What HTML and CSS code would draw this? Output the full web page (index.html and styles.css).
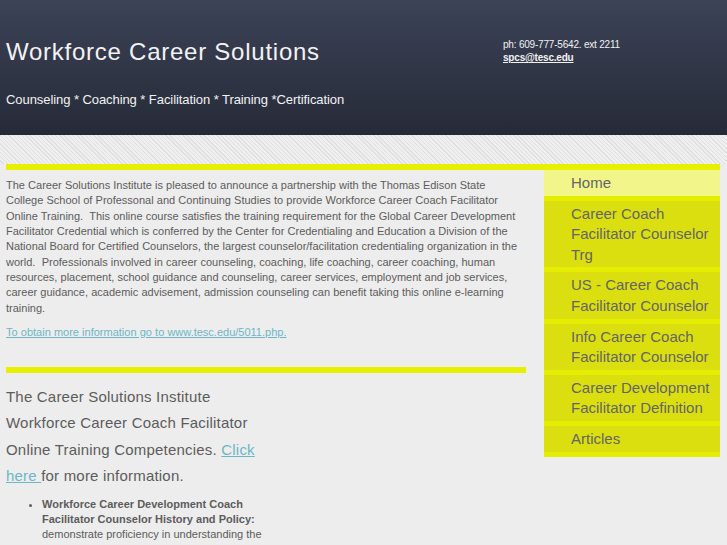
FILE: index.html
```html
<!DOCTYPE html>
<html lang="en">
<head>
    <meta charset="UTF-8">
    <meta name="viewport" content="width=device-width, initial-scale=1.0">
    <title>Workforce Career Solutions</title>
    <link rel="stylesheet" href="styles.css">
</head>
<body>
    <div class="header">
        <div class="brand">
            <h1>Workforce Career Solutions</h1>
            <p class="slogan">Counseling * Coaching * Facilitation * Training *Certification</p>
        </div>
        <div class="contact">
            <p>ph: 609-777-5642. ext 2211</p>
            <a href="#">spcs@tesc.edu</a>
        </div>
    </div>
    <div class="stripe"></div>

    <div class="page">
        <div class="bar"></div>
        <div class="columns">
            <div class="main">
                <p class="intro">The Career Solutions Institute is pleased to announce a partnership with the Thomas Edison State College School of Professonal and Continuing Studies to provide Workforce Career Coach Facilitator Online Training.&nbsp; This online course satisfies the training requirement for the Global Career Development Facilitator Credential which is conferred by the Center for Credentialing and Education a Division of the National Board for Certified Counselors, the largest counselor/facilitation credentialing organization in the world.&nbsp; Professionals involved in career counseling, coaching, life coaching, career coaching, human resources, placement, school guidance and counseling, career services, employment and job services, career guidance, academic advisement, admission counseling can benefit taking this online e-learning training.</p>
                <p class="intro"><a href="#">To obtain more information go to www.tesc.edu/5011.php.</a></p>

                <div class="bar short"></div>

                <div class="lower">
                    <div class="left">
                        <p class="lead">The Career Solutions Institute Workforce Career Coach Facilitator Online Training Competencies. <a href="#">Click here </a>for more information.</p>
                        <ul class="points">
                            <li><b>Workforce Career Development Coach Facilitator Counselor History and Policy:</b> demonstrate proficiency in understanding the</li>
                        </ul>
                    </div>
                </div>
            </div>

            <ul class="nav">
                <li class="current"><a href="#">Home</a></li>
                <li><a href="#">Career Coach Facilitator Counselor Trg</a></li>
                <li><a href="#">US - Career Coach Facilitator Counselor</a></li>
                <li><a href="#">Info Career Coach Facilitator Counselor</a></li>
                <li><a href="#">Career Development Facilitator Definition</a></li>
                <li><a href="#">Articles</a></li>
            </ul>
        </div>
    </div>
</body>
</html>
```

FILE: styles.css
```css
body {
    margin: 0;
    font-family: "Liberation Sans", Arial, sans-serif;
    background-color: #ededed;
    color: #5c5c5c;
}
a {
    color: #6db6c6;
}

/* header */
.header {
    height: 135px;
    display: flex;
    padding-left: 6px;
    background: linear-gradient(#3c4357, #262a38);
    color: #f2f2f2;
}
.brand {
    width: 497px;
}
.header h1 {
    margin: 37px 0 0;
    font-size: 24px;
    line-height: 30px;
    font-weight: normal;
    letter-spacing: 0.75px;
}
.slogan {
    margin: 25px 0 0;
    font-size: 13px;
    line-height: 16px;
    letter-spacing: -0.07px;
}
.contact {
    padding-top: 38px;
    font-size: 10px;
    line-height: 13px;
    letter-spacing: -0.2px;
}
.contact p {
    margin: 0;
}
.contact a {
    color: #f2f2f2;
    font-weight: bold;
}
.stripe {
    height: 29px;
    background: repeating-linear-gradient(45deg, #efefef 0, #efefef 2px, #e0e0e0 2px, #e0e0e0 3px);
}

/* content */
.page {
    padding: 0 7px 0 6px;
}
.bar {
    height: 6px;
    background-color: #e6f000;
}
.columns {
    display: flex;
    justify-content: space-between;
}
.main {
    width: 520px;
}
.intro {
    width: 518px;
    margin: 8px 0 9px;
    font-size: 11px;
    line-height: 15.33px;
    word-spacing: 0.1px;
}
.bar.short {
    margin-top: 27px;
}
.lower {
    display: flex;
}
.left {
    width: 270px;
}
.lead {
    margin: 11px 0 0;
    font-size: 15px;
    line-height: 26.2px;
    letter-spacing: 0.2px;
}
.points {
    margin: 8px 0 0;
    padding-left: 36px;
    font-size: 11px;
    line-height: 15px;
}

/* side menu */
.nav {
    width: 176px;
    margin: 0;
    padding: 0;
    list-style: none;
}
.nav li {
    padding: 3px 0 2px 27px;
    background-color: #dbdf10;
    border-bottom: 5px solid #e5ee00;
    font-size: 15px;
    line-height: 20.6px;
}
.nav li.current {
    background-color: #f2f58a;
}
.nav a {
    color: #656565;
    text-decoration: none;
}
```
